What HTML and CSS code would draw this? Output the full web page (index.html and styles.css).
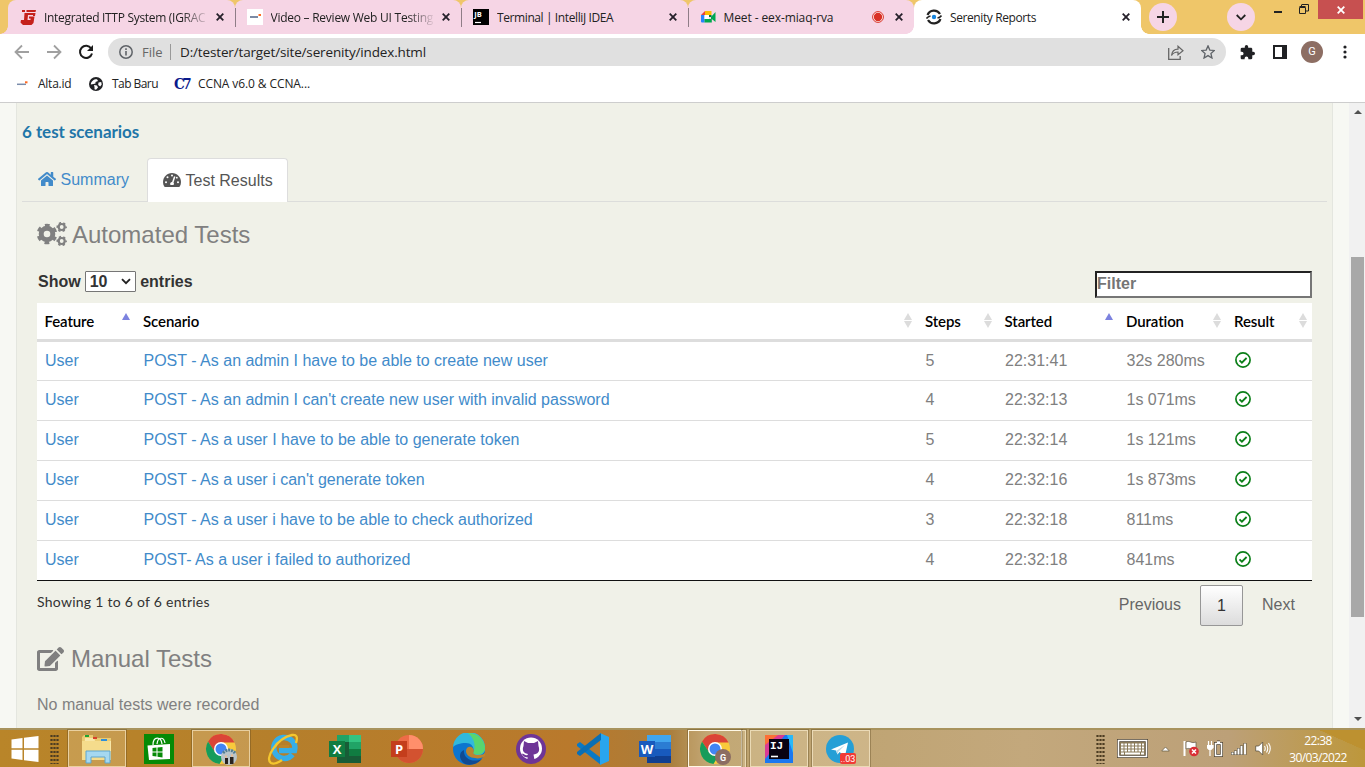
FILE: index.html
```html
<!DOCTYPE html>
<html lang="en">
<head>
<meta charset="utf-8">
<title>Serenity Reports</title>
<link rel="stylesheet" href="styles.css">
</head>
<body>
<svg class="defs" width="0" height="0">
  <symbol id="x" viewBox="0 0 8 8"><path d="M.7.7l6.6 6.6M7.3.7L.7 7.3" stroke="#25202a" stroke-width="1.8" fill="none"/></symbol>
  <symbol id="ok" viewBox="0 0 16 16"><circle cx="8" cy="8" r="7.1" fill="none" stroke="#0b7f18" stroke-width="1.7"/><path d="M4.5 8.3l2.4 2.4 4.7-4.7" fill="none" stroke="#0b7f18" stroke-width="1.8"/></symbol>
  <symbol id="chrome" viewBox="0 0 32 32"><circle cx="16" cy="16" r="15" fill="#f8ca3c"/><path d="M3 8.5A15 15 0 0 1 29.5 9.500H16L9.800 19z" fill="#db4437"/><path d="M3 8.500A15 15 0 0 0 14.500 31l6.500-11L10 19z" fill="#169c5b"/><circle cx="16" cy="16" r="7" fill="#fff"/><circle cx="16" cy="16" r="5.500" fill="#4285f4"/></symbol>
</svg>

<header class="tabstrip">
  <div class="tab first"><svg class="fav" viewBox="0 0 16 16"><path d="M4.500 4h11l-.5 3h-2V6H8l-.5 5h3V9.500H9V7.500h5.500L13.500 14l-2 2H3L.5 13.500 1 11h3z" fill="#c5211c"/><path d="M2 1h3v2H2zM6.500 1H16l-.5 2h-9z" fill="#c5211c"/></svg><span class="title fade t1">Integrated ITTP System (IGRAC</span><svg class="x"><use href="#x"/></svg></div>
  <div class="tab sep"><svg class="fav" viewBox="0 0 16 16"><path fill="#fff" d="M0 0h16v16H0z"/><path d="M3 8h8" stroke="#5b6d8d" stroke-width="1.600"/><path d="M11.500 6H14" stroke="#ff6b24" stroke-width="2"/></svg><span class="title fade t2">Video – Review Web UI Testing</span><svg class="x"><use href="#x"/></svg></div>
  <div class="tab sep"><svg class="fav" viewBox="0 0 16 16"><path d="M0 0h16v16H0z"/><path d="M2 13.500h6" stroke="#fff" stroke-width="1.200"/><text class="jb" x="1.300" y="8">JB</text></svg><span class="title t3">Terminal | IntelliJ IDEA</span><svg class="x"><use href="#x"/></svg></div>
  <div class="tab sep last"><svg class="fav" viewBox="0 0 16 16"><path d="M1 6l4-4v4z" fill="#ea4335"/><path d="M5 2h6.500v4H5z" fill="#fbbc04"/><path d="M1 6h3.500v7.500H2Q1 13.500 1 12.500z" fill="#2684fc"/><path d="M4.500 10H11V8l4.500-5v10L11.800 10v3.500H4.500z" fill="#00a94f"/><path d="M8.500 6L11.500 6 11.500 8 9 8z" fill="#007a3d"/><path d="M4.500 6H9v4H4.500z" fill="#fff"/></svg><span class="title t4">Meet - eex-miaq-rva</span><svg class="rec" viewBox="0 0 12 12"><circle cx="6" cy="6" r="5.400" fill="#fff" stroke="#d93025"/><circle cx="6" cy="6" r="4.200" fill="#d93025"/></svg><svg class="x"><use href="#x"/></svg></div>
  <div class="tab active"><svg class="fav" viewBox="0 0 16 16"><path d="M1.500 6A7 7 0 0 1 14 5M14.500 10A7 7 0 0 1 2 11" fill="none" stroke="#222" stroke-width="2.200"/><path d="M.5 9.500Q2 7.500 4.500 7M15.500 6.500Q14 8.500 11.500 9" fill="none" stroke="#222" stroke-width="1.600"/><circle cx="8" cy="8" r="2.200" fill="#1685df"/></svg><span class="title t5">Serenity Reports</span><svg class="x"><use href="#x"/></svg></div>
  <div class="round newtab"><svg width="14" height="14"><path d="M7 1v12M1 7h12" stroke="#222" stroke-width="2"/></svg></div>
  <div class="round chev"><svg width="10" height="7"><path d="M.7 1L5 5.300 9.300 1" fill="none" stroke="#222" stroke-width="1.800"/></svg></div>
  <svg class="min" width="8" height="2"><path d="M0 0h8v2H0z" fill="#222"/></svg>
  <svg class="max" width="10" height="10"><path d="M.5 3.500h6v6h-6zM.5 2.500h6M3 .5h6.500v6.500M2.500.5v2M9.500 7H7" fill="none" stroke="#222"/></svg>
  <div class="winclose"><svg width="8" height="8"><path d="M.7.7l6.600 6.600M7.300.7L.7 7.300" stroke="#fff" stroke-width="1.800"/></svg></div>
</header>

<nav class="toolbar">
  <svg class="nav-ic" viewBox="0 0 16 16"><path d="M15 8H2M8 1.500L1.500 8 8 14.500" fill="none" stroke="#a0a0a0" stroke-width="1.800"/></svg>
  <svg class="nav-ic" viewBox="0 0 16 16"><path d="M1 8h13M8 1.500L14.500 8 8 14.500" fill="none" stroke="#a0a0a0" stroke-width="1.800"/></svg>
  <svg class="nav-ic" viewBox="0 0 16 16"><path d="M13.200 4.500A6.100 6.100 0 1 0 14 9.500" fill="none" stroke="#1c1c1c" stroke-width="2"/><path d="M15 1v6H9z" fill="#1c1c1c"/></svg>
  <div class="omni">
    <svg width="14" height="14" viewBox="0 0 14 14"><circle cx="7" cy="7" r="6.200" fill="none" stroke="#5f6368" stroke-width="1.500"/><path d="M7 6v4.500M7 3.300v1.700" stroke="#5f6368" stroke-width="1.600"/></svg>
    <span class="scheme">File</span><i class="bar"></i><span class="url">D:/tester/target/site/serenity/index.html</span>
    <svg class="share" width="16" height="15" viewBox="0 0 16 15"><path d="M.7 3v11.300h11.500V11" fill="none" stroke="#666" stroke-width="1.300"/><path d="M3.500 10.500C4 6 6.500 4.200 10 4.200V1.200L15 5.700 10 9.800V7C7 7 5 8 3.500 10.500z" fill="none" stroke="#666" stroke-width="1.200"/></svg>
    <svg class="star" width="14" height="14" viewBox="0 0 24 24"><path d="M12 1.500l3.100 7.200 7.900.7-6 5.200 1.800 7.700L12 18.200l-6.800 4.100L7 14.600 1 9.400l7.900-.7z" fill="none" stroke="#5f6368" stroke-width="2.200"/></svg>
  </div>
  <svg class="puz" viewBox="1 1 22 22"><path fill="#202124" d="M20.500 11H19V7c0-1.100-.9-2-2-2h-4V3.500a2.500 2.500 0 0 0-5 0V5H4a2 2 0 0 0-2 2v3.800h1.500a2.700 2.700 0 0 1 0 5.400H2V20c0 1.100.9 2 2 2h3.800v-1.500a2.700 2.700 0 0 1 5.400 0V22H17a2 2 0 0 0 2-2v-4h1.500a2.500 2.500 0 0 0 0-5z"/></svg>
  <svg class="side" width="14" height="14"><path d="M0 0h14v14H0z" fill="#202124"/><path d="M2 2h7v10H2z" fill="#fff"/></svg>
  <div class="avatar">G</div>
  <svg class="dots" width="4" height="14" fill="#202124"><circle cx="2" cy="2" r="1.600"/><circle cx="2" cy="7" r="1.600"/><circle cx="2" cy="12" r="1.600"/></svg>
</nav>

<nav class="bookmarks">
  <svg width="14" height="14" viewBox="0 0 14 14"><path d="M1 7.300h9" stroke="#7a8cab" stroke-width="1.500"/><path d="M9 5.300h2.500" stroke="#ff6b24" stroke-width="2"/></svg><span class="b1">Alta.id</span>
  <svg width="14" height="14" viewBox="0 0 14 14"><circle cx="7" cy="7" r="7" fill="#202124"/><path d="M1.800 7.500C2 4 5 2 8 2.200L9 4 6.500 5v1.500l-2 .5zM5 8l3 .5 1 2-2 2.300-1.500-.5V10zM9.500 5.500l2.700-.5.5 2.500-1.500 2-2-1.500z" fill="#fff"/></svg><span class="b2">Tab Baru</span>
  <span class="c7">C7</span><span class="b3">CCNA v6.0 &amp; CCNA...</span>
</nav>

<main class="viewport">
  <div class="container">
    <h3 class="count">6 test scenarios</h3>
    <div class="navtabs">
      <a class="nt"><svg class="ni" viewBox="0 0 576 512"><path fill="#428bca" d="M280.370 148.260L96 300.110V464a16 16 0 0 0 16 16l112.060-.29a16 16 0 0 0 15.920-16V368a16 16 0 0 1 16-16h64a16 16 0 0 1 16 16v95.640a16 16 0 0 0 16 16.050L464 480a16 16 0 0 0 16-16V300L295.670 148.260a12.190 12.190 0 0 0-15.300 0zM571.600 251.470L488 182.560V44.050a12 12 0 0 0-12-12h-56a12 12 0 0 0-12 12v72.610L318.470 43a48 48 0 0 0-61 0L4.340 251.470a12 12 0 0 0-1.600 16.900l25.500 31A12 12 0 0 0 45.150 301l235.220-193.740a12.190 12.190 0 0 1 15.300 0L530.900 301a12 12 0 0 0 16.900-1.600l25.500-31a12 12 0 0 0-1.700-16.930z"/></svg>Summary</a>
      <a class="nt on"><svg class="ni" viewBox="0 0 576 512"><path fill="#555" d="M288 32C129 32 0 161 0 320c0 53 14 102 39 145 6 9 16 15 27 15h444c11 0 21-6 27-15 25-43 39-92 39-145C576 161 447 32 288 32z"/><g fill="#fff"><circle cx="288" cy="110" r="32"/><circle cx="144" cy="170" r="32"/><circle cx="96" cy="330" r="32"/><circle cx="480" cy="330" r="32"/><circle cx="442" cy="180" r="30"/><path d="M352 138l46 15-62 185a60 60 0 0 1 0 78h-96a62 62 0 0 1 50-98z"/></g></svg>Test Results</a>
    </div>
    <section class="pane">
      <h2><svg class="gears" viewBox="0 0 30 24"><g fill="none" stroke="gray"><circle cx="10" cy="12" r="5.800" stroke-width="5"/><circle cx="10" cy="12" r="8.900" stroke-width="2.800" stroke-dasharray="4.660 4.660" stroke-dashoffset="2.300" transform="rotate(30 10 12)"/><circle cx="24.700" cy="5" r="3" stroke-width="2.200"/><circle cx="24.700" cy="5" r="4.400" stroke-width="1.600" stroke-dasharray="2.300 2.300" stroke-dashoffset="1.150"/><circle cx="24.700" cy="19" r="3" stroke-width="2.200"/><circle cx="24.700" cy="19" r="4.400" stroke-width="1.600" stroke-dasharray="2.300 2.300" stroke-dashoffset="1.150"/></g></svg>Automated Tests</h2>
      <div class="controls"><span>Show</span><span class="sel">10<svg width="10" height="7"><path d="M1 1.200L5 5.200 9 1.200" fill="none" stroke="#222" stroke-width="1.900"/></svg></span><span>entries</span><span class="filter">Filter</span></div>
      <div class="table">
        <div class="row head"><div class="up">Feature</div><div class="both">Scenario</div><div class="both">Steps</div><div class="up">Started</div><div class="both">Duration</div><div class="both">Result</div></div>
        <div class="row r1"><a>User</a><a>POST - As an admin I have to be able to create new user</a><div>5</div><div>22:31:41</div><div>32s 280ms</div><div><svg class="ok"><use href="#ok"/></svg></div></div>
        <div class="row"><a>User</a><a>POST - As an admin I can't create new user with invalid password</a><div>4</div><div>22:32:13</div><div>1s 071ms</div><div><svg class="ok"><use href="#ok"/></svg></div></div>
        <div class="row"><a>User</a><a>POST - As a user I have to be able to generate token</a><div>5</div><div>22:32:14</div><div>1s 121ms</div><div><svg class="ok"><use href="#ok"/></svg></div></div>
        <div class="row"><a>User</a><a>POST - As a user i can't generate token</a><div>4</div><div>22:32:16</div><div>1s 873ms</div><div><svg class="ok"><use href="#ok"/></svg></div></div>
        <div class="row"><a>User</a><a>POST - As a user i have to be able to check authorized</a><div>3</div><div>22:32:18</div><div>811ms</div><div><svg class="ok"><use href="#ok"/></svg></div></div>
        <div class="row end"><a>User</a><a>POST- As a user i failed to authorized</a><div>4</div><div>22:32:18</div><div>841ms</div><div><svg class="ok"><use href="#ok"/></svg></div></div>
      </div>
      <div class="foot"><span class="info">Showing 1 to 6 of 6 entries</span><span class="prev">Previous</span><span class="pg">1</span><span class="next">Next</span></div>
      <h2 class="manual"><svg class="edit" viewBox="0 0 576 512"><path fill="gray" d="M402.600 83.200l90.200 90.200c3.800 3.800 3.800 10 0 13.800L274.400 405.600l-92.800 10.300c-12.400 1.400-22.900-9.100-21.500-21.500l10.300-92.800L388.800 83.200c3.800-3.800 10-3.800 13.800 0zm162-22.900l-48.800-48.800c-15.200-15.200-39.900-15.200-55.200 0l-35.400 35.400c-3.800 3.800-3.800 10 0 13.800l90.200 90.200c3.800 3.800 10 3.800 13.800 0l35.400-35.400c15.200-15.300 15.200-40 0-55.200zM384 346.200V448H64V128h229.800c3.200 0 6.200-1.300 8.500-3.500l40-40c7.600-7.600 2.200-20.500-8.500-20.500H48C21.500 64 0 85.500 0 112v352c0 26.500 21.500 48 48 48h352c26.500 0 48-21.500 48-48V306.200c0-10.700-12.900-16-20.500-8.500l-40 40c-2.200 2.300-3.500 5.300-3.500 8.500z"/></svg>Manual Tests</h2>
      <p class="none">No manual tests were recorded</p>
    </section>
  </div>
  <div class="scroll"><svg width="8" height="4"><path d="M0 4l4-4 4 4z" fill="#505050"/></svg><div class="thumb"></div><svg width="8" height="4"><path d="M0 0l4 4 4-4z" fill="#505050"/></svg></div>
</main>

<footer class="taskbar">
  <svg class="start" width="28" height="26" viewBox="0 0 28 26"><path d="M.5 3.500L11.500 2v10.300H.5zM13 1.800L27.500 0v12.300H13zM.5 13.700h11V24L.5 22.500zM13 13.700h14.500V26L13 24.200z" fill="#fff"/></svg>
  <div class="grip g1"></div>
  <div class="slots">
    <div class="slot box"><svg viewBox="0 0 32 32"><path d="M1 4l2-2h9v3h18v22H1z" fill="#eacb72"/><path d="M4 5h9l1 3h16v19H3z" fill="#f8e7a8"/><path d="M1 8h28v19H1z" fill="#f5dc8c"/><path d="M4 2h4v2H4z" fill="#1fa432"/><path d="M12 4h4v2h-4z" fill="#d8412c"/><path d="M20 6h6v2h-6z" fill="#2f8fd9"/><path d="M5 30V18h24v12h-5v-6H10v6z" fill="#a5d8f0" stroke="#5fa6cd"/></svg></div>
    <div class="slot"><svg viewBox="0 0 32 32"><path d="M1 1h30v30H1z" fill="#068a06"/><path d="M4.500 12.500L27 11v15L6 27z" fill="#fff"/><path d="M10 12c0-9 8-9 9-1M14 11c1-8 7-7 8-1" fill="none" stroke="#fff" stroke-width="1.200"/><path d="M9.500 15l4-.4v4h-4zM14.500 14.500l5-.6v4.700h-5zM9.500 19.600h4v4l-4-.6zM14.500 19.600h5v4.800l-5-.7z" fill="#068a06"/></svg></div>
    <div class="slot box"><svg viewBox="0 0 32 32"><use href="#chrome"/><circle cx="24" cy="24" r="8" fill="#b9c4c9"/><path d="M18 20q6-6 12 0" fill="none" stroke="#4f7d94" stroke-width="3" stroke-dasharray="2 1"/><path d="M20 25h3v6h-3zM25 24h3.500v7H25z" fill="#29231f"/><path d="M20 22.500h2v2h-2zM26 21.500h2v2h-2z" fill="#e9bc95"/></svg></div>
    <div class="slot"><svg viewBox="0 0 32 32"><path d="M25.500 21.500A10.500 10.500 0 1 1 27.500 17.500H12" fill="none" stroke="#36aee8" stroke-width="5.500"/><path d="M12 13.500h10" stroke="#bc852c" stroke-width="3"/><path d="M4 30C-3 26 10 5 25 2q7-1 4 8M4 30q4 2 11-3" fill="none" stroke="#f4c62e" stroke-width="2.300"/></svg></div>
    <div class="slot"><svg viewBox="0 0 32 32"><path d="M8 2h24v28H8z" fill="#185c37"/><path d="M8 2h12v7H8z" fill="#21a366"/><path d="M20 2h12v7H20z" fill="#33c481"/><path d="M20 9h12v7H20z" fill="#21a366"/><path d="M20 16h12v7H20z" fill="#107c41"/><path d="M0 8h16v16H0z" fill="#107c41"/><text class="office" x="8" y="20.500">X</text></svg></div>
    <div class="slot"><svg viewBox="0 0 32 32"><circle cx="18" cy="16" r="14" fill="#ed6c47"/><path d="M18 2a14 14 0 0 1 14 14H18z" fill="#ff8f6b"/><path d="M4 16h28a14 14 0 0 1-28 0z" fill="#d35230"/><path d="M0 8h16v16H0z" fill="#c43e1c"/><text class="office" x="8" y="20.500">P</text></svg></div>
    <div class="slot"><svg viewBox="0 0 32 32"><circle cx="16" cy="16" r="16" fill="#0c75cf"/><path d="M0 14A16 16 0 0 1 32 16c0 6-8 8-12 5 2-6-1-11-7-11C7 10 2 12 0 14z" fill="#31b9dc"/><path d="M15 0a16 16 0 0 1 17 15c0 7-9 8-12 5 3-6 2-14-5-20z" fill="#58d66f"/><path d="M11 17c-1 9 9 13 18 9A16 16 0 0 1 12 31c-7-5-6-12-1-14z" fill="#114a91"/><path d="M13 18c0-5 7-6 8 0-2 3 1 4 4 4 4 0 6-1 7-2v3c-3 2-7 3-10 2-5 0-9-3-9-7z" fill="#bc8430"/></svg></div>
    <div class="slot"><svg viewBox="0 0 32 32"><circle cx="16" cy="16" r="15" fill="#6e3597"/><circle cx="16" cy="15.500" r="11" fill="#fff"/><path d="M9 8l4 2h6l4-2 .5 5c2 6-1 8-5 8.500l1 5.500h-7v-3c-4 1-4-2-6-3 3-1 3 2 6 1l.5-1C8 20 7 17 8.500 13z" fill="#6e3597"/></svg></div>
    <div class="slot"><svg viewBox="0 0 32 32"><path d="M0 11l3-2 21 16v7L0 13z" fill="#0a79c5"/><path d="M23 0l9 4v24l-9 4z" fill="#29a5ee"/><path d="M0 21l3 2L24 7V0L0 19z" fill="#0a6fb5"/></svg></div>
    <div class="slot"><svg viewBox="0 0 32 32"><path d="M8 2h24v7H8z" fill="#41a5ee"/><path d="M8 9h24v7H8z" fill="#2b7cd3"/><path d="M8 16h24v7H8z" fill="#185abd"/><path d="M8 23h24v7H8z" fill="#103f91"/><path d="M0 8h16v16H0z" fill="#185abd"/><text class="office" x="8" y="20.500">W</text></svg></div>
    <div class="slot current"><svg viewBox="0 0 32 32"><use href="#chrome"/><circle cx="24" cy="24" r="8" fill="#8c6d62"/><text class="g" x="24" y="27.500">G</text></svg></div>
    <div class="slot box"><svg viewBox="0 0 32 32"><path d="M2 2h28v28H2z" fill="#1a78f0"/><path d="M2 2h14L2 20z" fill="#fc6f36"/><path d="M2 12l13-10h7L2 26z" fill="#d93a94"/><path d="M24 2h6v18z" fill="#28b8f8"/><path d="M6 6h20v20H6z" fill="#090212"/><path d="M8 23.500h7" stroke="#fff" stroke-width="1.600"/><text class="ij" x="7" y="16">IJ</text></svg></div>
    <div class="slot box"><svg viewBox="0 0 32 32"><circle cx="15" cy="16" r="14" fill="#259fd6"/><path d="M6 16.500l17-7-3 13.500-5.500-4-2 2.500-1.500-4z" fill="#fff"/><path d="M11 18l9-6-7 7-.5 2.500z" fill="#b8d8e8"/><rect x="15" y="20" width="16" height="11" rx="2" fill="#f03b36"/><text class="badge" x="23" y="29">..03</text></svg></div>
  </div>
  <div class="grip g2"></div>
  <svg class="kbd" width="31" height="19"><path d="M1.500 1.500h28v16h-28z" fill="#8a7a58" stroke="#4b4030" stroke-width="3"/><path d="M1.500 1.500h28v16h-28z" fill="none" stroke="#fff" stroke-width="1.600"/><path d="M4 5.500h23M4 8.500h23M4 11.500h23" stroke="#fff" stroke-width="2" stroke-dasharray="2.500 1"/><path d="M8 14.500h15M4 14.500h3M24 14.500h3" stroke="#fff" stroke-width="2"/></svg>
  <svg class="tri" width="9" height="6"><path d="M.7 5L4.500 1l3.800 4z" fill="#fff" stroke="#635940" stroke-width=".7"/></svg>
  <svg class="flag" width="16" height="17"><path d="M1.500 1v15" stroke="#fff" stroke-width="2"/><path d="M3 2c4-2 5 2 10 0v7c-4 2-6-2-10 0z" fill="#fff" stroke="#5b5240" stroke-width=".7"/><circle cx="11" cy="11.500" r="4.800" fill="#d92e35"/><path d="M9 9.500l4 4M13 9.500l-4 4" stroke="#fff" stroke-width="1.500"/></svg>
  <svg class="bat" width="16" height="17"><path d="M8.500 3.500h6v12h-6zM10 2h3" fill="none" stroke="#4b4030" stroke-width="3"/><path d="M8.500 3.500h6v12h-6zM10 2h3" fill="none" stroke="#fff" stroke-width="1.600"/><path d="M1.500 1v4M4.500 1v4M0 5.500h6v2L4 9.500H2L0 7.500zM3 9v7" stroke="#fff" stroke-width="1.200" fill="#fff"/></svg>
  <svg class="sig" width="16" height="13"><path d="M1.500 13v-3M4.500 13V8.500M7.500 13V6M10.500 13V3.500M14 13V1" stroke="#5b5240" stroke-width="3"/><path d="M1.500 12.500V10.500M4.500 12.500V9M7.500 12.500v-6M10.500 12.500V4M14 12.500v-11" stroke="#fff" stroke-width="1.900"/></svg>
  <svg class="vol" width="16" height="15"><path d="M.7 5h3l4-4v13l-4-4h-3z" fill="#fff" stroke="#5b5240" stroke-width=".8"/><path d="M9.500 5q1.500 2.500 0 5M11.500 3.500q2.500 4 0 8M13.500 2q3.500 5.500 0 11" fill="none" stroke="#fff" stroke-width="1.100"/></svg>
  <div class="clock"><span>22:38</span><span class="date">30/03/2022</span></div>
</footer>
</body>
</html>
```
FILE: styles.css
```css
* { box-sizing: border-box; }
html, body { height: 100%; }
body { margin: 0; overflow: hidden; display: flex; flex-direction: column; background: #fff; font-family: "Open Sans", "Noto Sans", sans-serif; font-size: 12px; color: #222; white-space: nowrap; }
.defs { position: absolute; }
svg { flex: none; display: block; }

.tabstrip { height: 34px; flex: none; display: flex; align-items: flex-start; background: #efc669; padding-left: 8px; }
.tab { width: 226.500px; height: 34px; flex: none; display: flex; align-items: center; padding: 0 11px 0 12px; background: #f6d5e5; border-radius: 8px 8px 0 0; position: relative; }
.tab.sep::after { content: ""; position: absolute; left: 0; top: 8px; width: 1px; height: 19px; background: #8f7d87; }
.tab.first::before { content: ""; position: absolute; left: -8px; bottom: 0; width: 8px; height: 8px; background: radial-gradient(circle at 0 0, #efc669 7.500px, #f6d5e5 8px); }
.tab.last { border-bottom-right-radius: 8px; }
.tab.active { background: #fff; z-index: 1; }
.tab.active::before, .tab.active::after { content: ""; position: absolute; bottom: 0; width: 8px; height: 8px; }
.tab.active::before { left: -8px; background: radial-gradient(circle at 0 0, #f6d5e5 7.500px, #fff 8px); }
.tab.active::after { right: -8px; background: radial-gradient(circle at 100% 0, #efc669 7.500px, #fff 8px); }
.fav { width: 16px; height: 16px; }
.title { flex: 1; margin-left: 8px; overflow: hidden; }
.fade { -webkit-mask-image: linear-gradient(90deg, #000 84%, transparent 101%); mask-image: linear-gradient(90deg, #000 84%, transparent 101%); }
.t1 { letter-spacing: -.3px; }
.t2 { letter-spacing: -.25px; }
.t3, .t5 { letter-spacing: -.4px; }
.t4 { letter-spacing: -.1px; }
.rec { width: 12px; height: 12px; margin-right: 3px; }
.x { width: 8px; height: 8px; margin-left: 8px; }
.jb { font: bold 7.500px "Open Sans", sans-serif; fill: #fff; }
.round { width: 28px; height: 28px; border-radius: 50%; background: #f6d5e5; margin-top: 3px; display: grid; place-items: center; }
.newtab { margin-left: 8.500px; }
.chev { margin-left: 50px; }
.min { margin: 11px 0 0 19px; }
.max { margin: 4px 0 0 17px; }
.winclose { margin-left: 9px; width: 45px; height: 19px; background: #c75050; display: grid; place-items: center; }

.toolbar { height: 36px; flex: none; display: flex; align-items: center; padding-left: 14px; }
.nav-ic { width: 16px; height: 16px; margin-right: 16px; }
.omni { width: 1118px; height: 28px; margin-left: -2px; border-radius: 14px; background: #e0e0e0; display: flex; align-items: center; padding: 0 11px; }
.scheme { margin-left: 9px; width: 28px; font-size: 13px; color: #666; }
.bar { width: 1px; height: 16px; background: #999; }
.url { margin-left: 9px; font-size: 13.500px; letter-spacing: -.15px; }
.share { margin-left: auto; }
.star { margin-left: 17px; }
.puz { width: 15px; height: 15px; margin-left: 14px; }
.side { margin-left: 18px; }
.avatar { width: 22px; height: 22px; border-radius: 50%; background: #8d6e63; color: #fff; font: 11px/22px Roboto, sans-serif; text-align: center; margin-left: 14px; }
.dots { margin-left: 19.500px; }

.bookmarks { height: 33px; flex: none; display: flex; align-items: center; padding: 0 0 5px 16px; border-bottom: 1px solid #cdcdcd; }
.bookmarks span { margin-left: 8px; }
.bookmarks .b1 { width: 51px; letter-spacing: -.25px; }
.bookmarks .b2 { width: 54px; margin-left: 9px; letter-spacing: -.55px; }
.bookmarks .b3 { letter-spacing: -.1px; }
.bookmarks .c7 { margin-left: 8px; width: 16px; font: bold 15px/18px "DejaVu Serif Condensed", "DejaVu Serif", serif; letter-spacing: -2.500px; color: #0b1a8c; }

.viewport { flex: 1; min-height: 0; display: flex; background: #f7f8f3; padding-left: 16px; }
.container { width: 1317px; height: 100%; border: solid #e4e6df; border-width: 0 1px; background: #f0f1e8; padding: 0 5px; }
.count { margin: 18px 0 16px; height: 21px; font: bold 17px/21px Lato, sans-serif; letter-spacing: -.05px; color: #1f76a8; }
.navtabs { height: 44px; display: flex; border-bottom: 1px solid #dcdddb; font: 16px/43px "Liberation Sans", Arial, sans-serif; }
.nt { display: flex; align-items: center; padding-left: 16px; width: 125px; height: 43px; color: #428bca; }
.nt.on { width: 141px; height: 44px; padding-left: 15px; background: #fff; border: 1px solid #ddd; border-bottom: 0; border-radius: 4px 4px 0 0; color: #555; }
.nt.on, .nt { line-height: 42px; }
.ni { width: 18px; height: 16px; margin: -1px 4.500px 0 0; }
.pane { padding-left: 15px; width: 1290px; font: 16px/20px "Liberation Sans", Arial, sans-serif; color: gray; }
.pane h2 { margin: 19px 0 0; height: 28px; font-size: 24px; font-weight: normal; line-height: 28px; display: flex; align-items: center; color: gray; }
.gears { width: 30px; height: 24px; margin: -2px 5px 0 0; }
.controls { display: flex; align-items: flex-start; height: 32px; margin-top: 22px; font-weight: bold; color: #333; padding-left: 1px; line-height: 21px; }
.sel { width: 51px; height: 21px; margin: 0 4.500px 0 4px; border: 1px solid #767676; border-radius: 1px; background: #fff; display: flex; align-items: center; justify-content: space-between; padding: 0 4px; line-height: 19px; }
.filter { margin-left: auto; width: 217px; height: 27px; background: #fff; border: 2px solid #767676; border-color: #222 #767676 #767676 #222; color: #757575; line-height: 22px; }
.table { background: #fff; }
.row { display: grid; grid-template-columns: 98.500px 782px 79.500px 121.500px 108px 1fr; height: 40px; line-height: 38px; border-bottom: 1px solid #ddd; }
.row > * { padding-left: 8px; position: relative; }
.row a { color: #428bca; }
.r1 { height: 39px; line-height: 37px; }
.end { border-color: #111; }
.head { height: 39px; border-bottom: 3px solid #ddd; font: 600 15px/37px Lato, sans-serif; letter-spacing: -.1px; color: #000; }
.row.head > * { padding-left: 7.500px; }
.head > *::after { content: ""; position: absolute; right: 5.500px; top: 10px; border: solid transparent; border-width: 0 4.500px 7px; border-bottom-color: #7c82df; }
.head > .both::after { border-bottom-color: #dcdcdc; }
.head > .both::before { content: ""; position: absolute; right: 5.500px; top: 18px; border: solid transparent; border-width: 7px 4.500px 0; border-top-color: #dcdcdc; }
.ok { width: 16px; height: 16px; margin-top: 10px; }
.foot { display: flex; height: 48px; padding-top: 4px; line-height: 39px; color: #666; }
.info { flex: 1; font: 14px/34px Lato, sans-serif; letter-spacing: .26px; color: #333; }
.pg { width: 43px; height: 41px; margin: 0 19px; border: 1px solid #979797; border-radius: 2px; background: linear-gradient(#fff, #dcdcdc); color: #333; text-align: center; }
.next { width: 50px; }
.pane .manual { margin-top: 16px; }
.edit { width: 27px; height: 24px; margin: -1px 7px 0 0; }
.none { margin: 22px 0 0; }
.scroll { margin-left: auto; width: 16px; height: 100%; background: #f1f1f1; display: flex; flex-direction: column; align-items: center; justify-content: space-between; padding: 7px 0 7px 1px; }
.thumb { width: 13px; height: 360px; background: #a8a8a8; margin-top: 42px; }

.taskbar { height: 39px; flex: none; display: flex; align-items: center; border-top: 2px solid #a8935d; background: linear-gradient(24deg, transparent 0 87.500%, #bd9130 87.600%) right / 285px 100% no-repeat, linear-gradient(90deg, #b98529, #b57f2b 20%, #b9792c 42%, #aa7d3b 49%, #bca16c 52%, #c3a87c 75%, #bca078 90%, #bd973b); }
.start { margin-left: 11px; }
.grip { width: 9px; height: 30px; background: radial-gradient(circle, #4c3c22 1px, transparent 1.300px) 0 0 / 3px 4px; }
.g1 { margin-left: 11px; }
.slots { display: flex; height: 100%; margin-left: 7px; }
.slot { width: 62px; height: 37px; display: grid; place-items: center; position: relative; }
.slot svg { width: 32px; height: 32px; z-index: 1; }
.box::before, .current::before, .current::after { content: ""; position: absolute; left: 2px; right: 2px; top: 0; bottom: 0; background: rgba(255,240,210,.22); border: 1px solid rgba(255,244,215,.6); outline: 1px solid rgba(90,70,30,.35); }
.current::before { right: 6px; border-color: #fff8e6; background: rgba(255,240,210,.1); }
.current::after { left: 56px; right: 2px; border-width: 1px 1px 0 0; }
.current svg { margin-right: 4px; }
.office { font: bold 13px "Open Sans", sans-serif; fill: #fff; text-anchor: middle; }
.g { font: bold 9px Roboto, sans-serif; fill: #fff; text-anchor: middle; }
.ij { font: bold 11px "Liberation Mono", monospace; fill: #fff; }
.badge { font: 9px Roboto, sans-serif; fill: #fff; text-anchor: middle; }
.g2 { margin-left: auto; }
.kbd { margin-left: 12px; }
.tri { margin-left: 13px; }
.flag { margin-left: 13px; }
.bat { margin-left: 8px; }
.sig { margin-left: 8px; }
.vol { margin-left: 8px; }
.clock { width: 94px; display: flex; flex-direction: column; align-items: center; color: #fff; line-height: 17px; letter-spacing: -.6px; }
```
